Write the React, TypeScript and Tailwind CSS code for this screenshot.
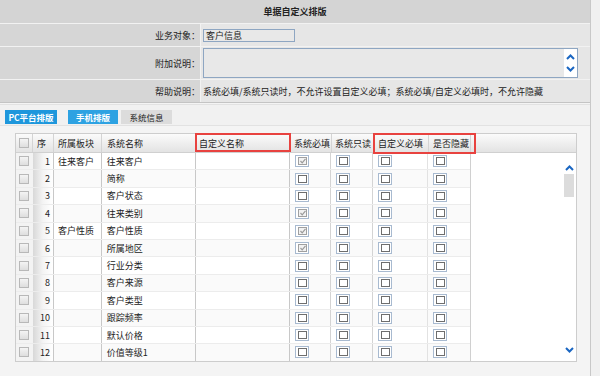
import React from 'react';

const rows = [
  { no: 1, block: '往来客户', name: '往来客户', req: true },
  { no: 2, block: '', name: '简称', req: false },
  { no: 3, block: '', name: '客户状态', req: false },
  { no: 4, block: '', name: '往来类别', req: true },
  { no: 5, block: '客户性质', name: '客户性质', req: true },
  { no: 6, block: '', name: '所属地区', req: true },
  { no: 7, block: '', name: '行业分类', req: false },
  { no: 8, block: '', name: '客户来源', req: false },
  { no: 9, block: '', name: '客户类型', req: false },
  { no: 10, block: '', name: '跟踪频率', req: false },
  { no: 11, block: '', name: '默认价格', req: false },
  { no: 12, block: '', name: '价值等级1', req: false },
  { no: 13, block: '', name: '', req: false },
];

function Box({ checked }: { checked?: boolean }) {
  return (
    <span className="inline-flex w-[14px] h-[12px] items-center justify-center border border-[#a8bad0] bg-white">
      {checked ? (
        <span className="relative w-[9px] h-[8px] border border-[#a0a0a0] bg-[#f2f2f2]">
          <svg className="absolute left-[1px] top-[0px]" width="6" height="6" viewBox="0 0 6 6">
            <polyline points="0.5,3 2.2,4.8 5.5,0.8" fill="none" stroke="#9a9a9a" strokeWidth="1.2" />
          </svg>
        </span>
      ) : (
        <span className="w-[9px] h-[8px] border border-[#6e6e6e] bg-white" />
      )}
    </span>
  );
}

function GrayBox() {
  return <span className="inline-block w-[10px] h-[10px] border border-[#b8b8b8] bg-gradient-to-b from-[#f4f4f4] to-[#dedede]" />;
}

function Chevron({ down }: { down?: boolean }) {
  return (
    <svg width="9" height="6" viewBox="0 0 9 6">
      <polyline
        points={down ? '1,1 4.5,4.5 8,1' : '1,5 4.5,1.5 8,5'}
        fill="none"
        stroke="#1a66c2"
        strokeWidth="2"
      />
    </svg>
  );
}

export default function App() {
  return (
    <div className="w-[600px] h-[376px] overflow-hidden flex bg-[#f0f0f0] text-[9px] text-[#222] font-['Noto_Sans_CJK_SC','Liberation_Sans',sans-serif] leading-none">
      <div className="w-[591px] flex flex-col border-r border-[#c8c8c8]">
        {/* form header */}
        <div className="flex flex-col bg-[#f2f2f2] gap-px border-b border-[#c4c4c4]">
          <div className="h-[23px] bg-[#d4d4d4] flex items-center justify-center font-bold">单据自定义排版</div>
          <div className="h-[22px] flex gap-px">
            <div className="w-[200px] bg-[#d6d6d6] flex items-center justify-end">业务对象：</div>
            <div className="flex-1 bg-[#e6e6e6] flex items-center pl-[2px]">
              <div className="w-[92px] h-[13px] border border-[#8ea6c2] bg-[#e8e8e8] flex items-center pl-[2px]">客户信息</div>
            </div>
          </div>
          <div className="h-[32px] flex gap-px">
            <div className="w-[200px] bg-[#d6d6d6] flex items-center justify-end">附加说明：</div>
            <div className="flex-1 bg-[#e6e6e6] flex items-center pl-[2px]">
              <div className="w-[375px] h-[30px] border border-[#8ea6c2] bg-[#e8e8e8] flex justify-end">
                <div className="w-[13px] bg-white flex flex-col items-center justify-center gap-[6px]">
                  <Chevron />
                  <Chevron down />
                </div>
              </div>
            </div>
          </div>
          <div className="h-[22px] flex gap-px">
            <div className="w-[200px] bg-[#d6d6d6] flex items-center justify-end">帮助说明：</div>
            <div className="flex-1 bg-[#e6e6e6] flex items-center pl-[2px]">
              系统必填/系统只读时，不允许设置自定义必填；系统必填/自定义必填时，不允许隐藏
            </div>
          </div>
        </div>

        {/* tab panel */}
        <div className="flex-1 bg-[#f4f4f4] flex flex-col">
          <div className="h-[22px] mt-[1px] bg-[#f1f1f1] border-y border-[#e2e2e2] flex items-end px-[5px] pb-[1px] text-[8.5px]">
            <div className="w-[52px] h-[14px] bg-[#1e97dc] text-white font-bold flex items-center justify-center whitespace-nowrap">PC平台排版</div>
            <div className="w-[50px] h-[14px] ml-[11px] bg-[#2da2e2] text-white font-bold flex items-center justify-center">手机排版</div>
            <div className="w-[51px] h-[14px] ml-[3px] bg-[#dcdcdc] flex items-center justify-center">系统信息</div>
          </div>

          <div className="ml-[15px] mt-[7px] w-[562px] h-[229px] border border-[#cdcdcd] bg-white flex flex-col">
            {/* header */}
            <div className="relative h-[19px] flex bg-gradient-to-b from-[#fbfbfb] to-[#e3e3e3] border-b border-[#d0d0d0]">
              <div className="w-[17px] flex items-center justify-center border-r border-[#d4d4d4]">
                <GrayBox />
              </div>
              <div className="w-[21px] flex items-center pl-[4px] border-r border-[#d4d4d4]">序</div>
              <div className="w-[48px] flex items-center pl-[4px] border-r border-[#d4d4d4]">所属板块</div>
              <div className="w-[94px] flex items-center pl-[5px] border-r border-[#d4d4d4]">系统名称</div>
              <div className="w-[95px] flex items-center pl-[3px] border-r border-[#d4d4d4]">自定义名称</div>
              <div className="w-[41px] flex items-center pl-[3px] border-r border-[#d4d4d4] whitespace-nowrap overflow-hidden">系统必填</div>
              <div className="w-[42px] flex items-center pl-[3px] border-r border-[#d4d4d4]">系统只读</div>
              <div className="w-[55px] flex items-center pl-[4px] border-r border-[#d4d4d4]">自定义必填</div>
              <div className="w-[42px] flex items-center pl-[4px] border-r border-[#d4d4d4]">是否隐藏</div>
              <div className="absolute left-[179px] top-[-1px] w-[96px] h-[19px] border-2 border-[#e8423f]" />
              <div className="absolute left-[357px] top-[-1px] w-[103px] h-[21px] border-2 border-[#e8423f]" />
            </div>

            {/* body */}
            <div className="flex-1 flex overflow-hidden">
              <div className="w-[455px] border-r border-[#d0d0d0] overflow-hidden">
                {rows.map((r) => (
                  <div
                    key={r.no}
                    className={`h-[17.4px] flex border-b border-[#ececec] ${r.no % 2 === 0 ? 'bg-[#fafafa]' : 'bg-white'}`}
                  >
                    <div className="w-[17px] flex items-center justify-center bg-[#f3f3f3]">
                      <GrayBox />
                    </div>
                    <div className="w-[21px] flex items-center justify-end pr-[3px] border-r border-[#c8c8c8] bg-gradient-to-r from-[#d8d8d8] via-[#f4f4f4] to-white">
                      {r.no}
                    </div>
                    <div className="w-[48px] flex items-center pl-[4px] border-r border-[#c8c8c8]">{r.block}</div>
                    <div className="w-[94px] flex items-center pl-[5px] border-r border-[#c8c8c8]">{r.name}</div>
                    <div className="w-[95px] border-r border-[#c8c8c8]" />
                    <div className="w-[41px] flex items-center pl-[5px] border-r border-[#d4d4d4]">
                      <Box checked={r.req} />
                    </div>
                    <div className="w-[42px] flex items-center pl-[5px] border-r border-[#d4d4d4]">
                      <Box />
                    </div>
                    <div className="w-[55px] flex items-center pl-[5px] border-r border-[#e2e2e2]">
                      <Box />
                    </div>
                    <div className="w-[42px] flex items-center pl-[5px]">
                      <Box />
                    </div>
                  </div>
                ))}
              </div>
              <div className="flex-1 flex justify-end pr-[2px]">
                <div className="w-[10px] flex flex-col items-center pt-[12px] pb-[8px]">
                  <Chevron />
                  <div className="w-[10px] h-[23px] mt-[3px] bg-[#dcdcdc]" />
                  <div className="flex-1" />
                  <Chevron down />
                </div>
              </div>
            </div>
          </div>
        </div>
      </div>
      <div className="flex-1 bg-[#f0f0f0]" />
    </div>
  );
}
